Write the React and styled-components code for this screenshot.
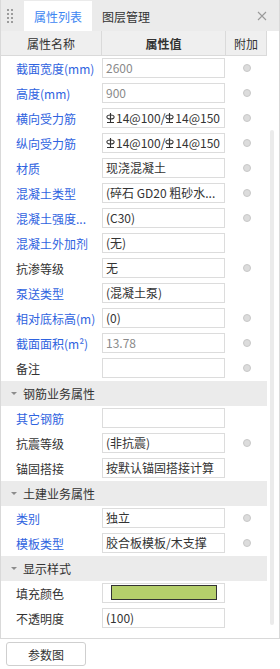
import React from 'react'
import styled, { createGlobalStyle } from 'styled-components'

const GlobalStyle = createGlobalStyle`
    body {
        margin: 0;
        background: #fff;
        font-family: "Noto Sans CJK SC", "Noto Sans", sans-serif;
        font-size: 12px;
        color: #333;
    }
`;

const rows = [
    { label: '截面宽度(mm)', value: '2600', link: true, muted: true, dot: true },
    { label: '高度(mm)', value: '900', link: true, muted: true, dot: true },
    { label: '横向受力筋', value: 'rebar', link: true, dot: true },
    { label: '纵向受力筋', value: 'rebar', link: true, dot: true },
    { label: '材质', value: '现浇混凝土', link: true, dot: true },
    { label: '混凝土类型', value: '(碎石 GD20 粗砂水...', link: true, dot: true },
    { label: '混凝土强度...', value: '(C30)', link: true, dot: true },
    { label: '混凝土外加剂', value: '(无)', link: true },
    { label: '抗渗等级', value: '无', dot: true },
    { label: '泵送类型', value: '(混凝土泵)', link: true },
    { label: '相对底标高(m)', value: '(0)', link: true, dot: true },
    { label: '截面面积(m²)', value: '13.78', link: true, muted: true, dot: true },
    { label: '备注', value: '', dot: true },
    { section: '钢筋业务属性' },
    { label: '其它钢筋', value: '', link: true },
    { label: '抗震等级', value: '(非抗震)', dot: true },
    { label: '锚固搭接', value: '按默认锚固搭接计算' },
    { section: '土建业务属性' },
    { label: '类别', value: '独立', link: true, dot: true },
    { label: '模板类型', value: '胶合板模板/木支撑', link: true, dot: true },
    { section: '显示样式' },
    { label: '填充颜色', value: 'swatch' },
    { label: '不透明度', value: '(100)' },
]

function RebarMark() {
    return (
        <svg width="9" height="12" viewBox="0 0 9 12" style={{ verticalAlign: '-1px', marginRight: 1, flex: 'none' }}>
            <ellipse cx="4.5" cy="5" rx="3.6" ry="2" fill="none" stroke="#333" strokeWidth="1.1" />
            <path d="M4.5 1v9M1 10.5h7" stroke="#333" strokeWidth="1.1" fill="none" />
        </svg>
    )
}

function Value({ row }) {
    if (row.value === 'rebar') {
        return (
            <ValueBox>
                <RebarMark />14@100/<RebarMark />14@150
            </ValueBox>
        )
    }
    if (row.value === 'swatch') {
        return (
            <ValueBox>
                <Swatch $color="#b5cf6b" />
            </ValueBox>
        )
    }
    return <ValueBox $muted={row.muted}>{row.value}</ValueBox>
}

function App() {
    return (
        <>
            <GlobalStyle />
            <Page>
                <Panel>
                    <TabBar>
                        <Grip>
                            {Array.from({ length: 8 }).map((_, i) => <i key={i} />)}
                        </Grip>
                        <Tab $active>属性列表</Tab>
                        <Tab>图层管理</Tab>
                        <Close>
                            <svg width="10" height="10" viewBox="0 0 10 10">
                                <path d="M1 1l8 8M9 1l-8 8" stroke="#9a9a9a" strokeWidth="1.1" />
                            </svg>
                        </Close>
                    </TabBar>
                    <Body>
                        <Grid>
                            <HeaderRow>
                                <HeadCell>属性名称</HeadCell>
                                <HeadCell $bold>属性值</HeadCell>
                                <HeadCell>附加</HeadCell>
                            </HeaderRow>
                            {rows.map((row, i) =>
                                row.section ? (
                                    <SectionRow key={i}>
                                        <Caret />
                                        {row.section}
                                    </SectionRow>
                                ) : (
                                    <Row key={i}>
                                        <Label $link={row.link}>{row.label}</Label>
                                        <Value row={row} />
                                        <Extra>{row.dot && <Dot />}</Extra>
                                    </Row>
                                )
                            )}
                        </Grid>
                        <ScrollTrack>
                            <Thumb />
                        </ScrollTrack>
                    </Body>
                </Panel>
                <Footer>
                    <Button>参数图</Button>
                </Footer>
            </Page>
        </>
    )
}

const Page = styled.div`
    width: 280px;
    height: 669px;
    display: flex;
    flex-direction: column;
`;

const Panel = styled.div`
    width: 280px;
    height: 639px;
    flex: none;
    box-sizing: border-box;
    border: 1px solid #d9d9d9;
    border-top: none;
    display: flex;
    flex-direction: column;
    overflow: hidden;
`;

const TabBar = styled.div`
    height: 31px;
    flex: none;
    background: #ebebeb;
    display: flex;
    align-items: flex-end;
    box-sizing: border-box;
    padding-top: 1px;
`;

const Grip = styled.div`
    width: 23px;
    height: 30px;
    display: grid;
    grid-template-columns: 2px 2px;
    grid-auto-rows: 2px;
    column-gap: 2px;
    row-gap: 2px;
    align-content: center;
    padding-left: 6px;
    box-sizing: border-box;
    i {
        background: #9c9c9c;
    }
`;

const Tab = styled.div`
    height: 30px;
    padding: 0 10px;
    display: flex;
    align-items: center;
    font-size: 12px;
    color: ${p => (p.$active ? '#3d86f2' : '#333')};
    background: ${p => (p.$active ? '#fff' : 'transparent')};
`;

const Close = styled.div`
    margin-left: auto;
    width: 30px;
    height: 30px;
    display: flex;
    align-items: center;
    justify-content: center;
    padding-right: 2px;
`;

const Body = styled.div`
    flex: 1;
    display: flex;
    min-height: 0;
`;

const Grid = styled.div`
    width: 266px;
    flex: none;
    display: flex;
    flex-direction: column;
`;

const HeaderRow = styled.div`
    height: 25px;
    flex: none;
    display: grid;
    grid-template-columns: 101px 124px 41px;
    background: #efefef;
    box-sizing: border-box;
    border-bottom: 1px solid #dadada;
`;

const HeadCell = styled.div`
    display: flex;
    align-items: center;
    justify-content: center;
    border-right: 1px solid #dadada;
    font-size: 12px;
    font-weight: ${p => (p.$bold ? 700 : 400)};
    color: #333;
`;

const Row = styled.div`
    height: 25px;
    flex: none;
    display: grid;
    grid-template-columns: 101px 124px 41px;
    align-items: center;
`;

const Label = styled.div`
    padding-left: 15px;
    white-space: nowrap;
    overflow: hidden;
    color: ${p => (p.$link ? '#2f63e0' : '#333')};
`;

const ValueBox = styled.div`
    width: 123px;
    height: 20px;
    box-sizing: border-box;
    border: 1px solid #dcdcdc;
    padding: 0 3px;
    margin-top: -2px;
    display: flex;
    align-items: center;
    white-space: nowrap;
    overflow: hidden;
    color: ${p => (p.$muted ? '#8a8a8a' : '#333')};
`;

const Swatch = styled.div`
    width: 106px;
    height: 15px;
    flex: none;
    box-sizing: border-box;
    margin-left: 5px;
    border: 1px solid #333;
    background: ${p => p.$color};
`;

const Extra = styled.div`
    display: flex;
    justify-content: center;
    margin-top: -2px;
`;

const Dot = styled.span`
    width: 8px;
    height: 8px;
    border-radius: 50%;
    box-sizing: border-box;
    background: #dcdcdc;
    border: 1px solid #c8c8c8;
`;

const SectionRow = styled.div`
    height: 25px;
    flex: none;
    display: flex;
    align-items: center;
    background: #ebebeb;
    color: #333;
    padding-left: 10px;
    font-size: 12px;
`;

const Caret = styled.span`
    width: 0;
    height: 0;
    border-left: 3px solid transparent;
    border-right: 3px solid transparent;
    border-top: 3px solid #8c8c8c;
    margin-right: 6px;
`;

const ScrollTrack = styled.div`
    flex: 1;
    display: flex;
    justify-content: center;
    padding-top: 99px;
    padding-right: 2px;
    box-sizing: border-box;
`;

const Thumb = styled.div`
    width: 4px;
    height: 495px;
    border-radius: 2px;
    background: #ebebeb;
`;

const Footer = styled.div`
    padding: 3px 0 0 6px;
`;

const Button = styled.button`
    width: 80px;
    height: 24px;
    border: 1px solid #cfcfcf;
    border-radius: 3px;
    background: #fff;
    font-family: "Noto Sans CJK SC", "Noto Sans", sans-serif;
    font-size: 12px;
    color: #333;
    padding: 0;
`;

export default App
